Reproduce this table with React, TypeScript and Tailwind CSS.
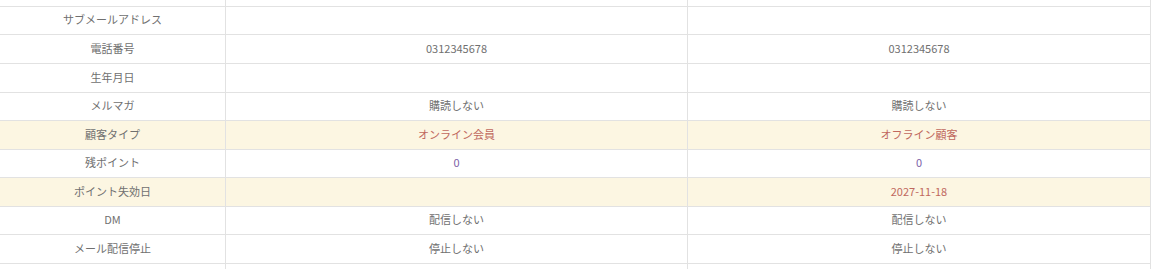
type Row = {
    label: string;
    a: string;
    b: string;
    h: number;
    hl?: boolean;
    accentA?: string;
    accentB?: string;
};

const rows: Row[] = [
    { label: '', a: '', b: '', h: 7 },
    { label: 'サブメールアドレス', a: '', b: '', h: 28 },
    { label: '電話番号', a: '0312345678', b: '0312345678', h: 29 },
    { label: '生年月日', a: '', b: '', h: 29 },
    { label: 'メルマガ', a: '購読しない', b: '購読しない', h: 28 },
    {
        label: '顧客タイプ',
        a: 'オンライン会員',
        b: 'オフライン顧客',
        h: 29,
        hl: true,
        accentA: 'text-[#c0685e]',
        accentB: 'text-[#c0685e]',
    },
    {
        label: '残ポイント',
        a: '0',
        b: '0',
        h: 28,
        accentA: 'text-[#7d62a8]',
        accentB: 'text-[#7d62a8]',
    },
    {
        label: 'ポイント失効日',
        a: '',
        b: '2027-11-18',
        h: 29,
        hl: true,
        accentB: 'text-[#c0685e]',
    },
    { label: 'DM', a: '配信しない', b: '配信しない', h: 28 },
    { label: 'メール配信停止', a: '停止しない', b: '停止しない', h: 29 },
];

const App = () => {
    return (
        <div
            className="w-[1153px] h-[269px] overflow-hidden bg-white text-[11px] text-[#707070]"
            style={{ fontFamily: '"Noto Sans CJK JP", "Noto Sans", sans-serif' }}
        >
            <div className="w-[1151px] border-r border-[#e2e2e2]">
                {rows.map((r, i) => (
                    <div
                        key={i}
                        className={`flex border-b border-[#e2e2e2] ${r.hl ? 'bg-[#fcf6e2]' : 'bg-white'}`}
                        style={{ height: r.h }}
                    >
                        <div className="w-[226px] shrink-0 flex items-center justify-center pb-[2px] border-r border-[#e2e2e2] overflow-hidden">
                            {r.label}
                        </div>
                        <div
                            className={`w-[462px] shrink-0 flex items-center justify-center pb-[2px] border-r border-[#e2e2e2] overflow-hidden ${r.accentA ?? ''}`}
                        >
                            {r.a}
                        </div>
                        <div
                            className={`flex-1 flex items-center justify-center pb-[2px] overflow-hidden ${r.accentB ?? ''}`}
                        >
                            {r.b}
                        </div>
                    </div>
                ))}
                <div className="flex h-[6px]">
                    <div className="w-[226px] shrink-0 border-r border-[#e2e2e2]" />
                    <div className="w-[462px] shrink-0 border-r border-[#e2e2e2]" />
                    <div className="flex-1" />
                </div>
            </div>
        </div>
    );
};

export default App;
